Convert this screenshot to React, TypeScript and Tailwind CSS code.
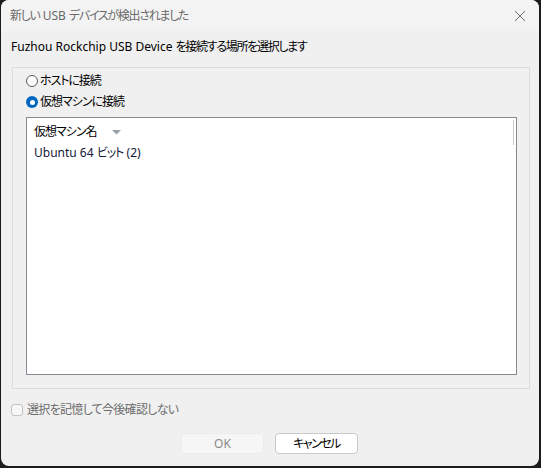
import React from "react";

export default function App() {
  const font = { fontFamily: '"Noto Sans", "Noto Sans CJK JP", sans-serif' };
  return (
    <div className="w-[541px] h-[468px] bg-[#1c1c1c] pl-px pr-[2px] pb-[2px] [font-feature-settings:'palt']" style={font}>
      <div className="w-full h-full rounded-[8px] overflow-hidden bg-[#f0f0f0] flex flex-col">
        {/* Title bar */}
        <div className="h-[31px] bg-[#f3f3f3] flex items-center justify-between pl-[9px] pr-[10px] shrink-0">
          <span className="text-[12px] text-[#6a6a6a] leading-none whitespace-pre">
            <span className="tracking-[-1.3px]">新しい</span>
            <span> USB </span>
            <span className="tracking-[-1.3px]">デバイスが検出されました</span>
          </span>
          <svg width="12" height="12" viewBox="0 0 12 12" className="mr-[3px]">
            <path d="M1 1 L11 11 M11 1 L1 11" stroke="#707070" strokeWidth="1" />
          </svg>
        </div>
        <div className="flex-1 flex flex-col pl-[10px] pr-[9px]">
          <div className="h-[36px] pb-[4px] flex items-center text-[12px] text-black leading-none whitespace-pre">
            <span>Fuzhou Rockchip USB Device </span>
            <span className="tracking-[-1.3px]">を接続する場所を選択します</span>
          </div>
          {/* group box */}
          <div className="h-[322px] border border-[#dcdcdc] ml-px flex flex-col pl-[13px] pr-[12px] pt-[6px]">
            <label className="flex items-center h-[14px] gap-[2px] text-[12px] text-black leading-none">
              <span className="w-[12px] h-[12px] rounded-full border border-[#5c5c5c] bg-white inline-block" />
              <span className="tracking-[-1.1px]">ホストに接続</span>
            </label>
            <label className="flex items-center h-[14px] mt-[7px] gap-[2px] text-[12px] text-black leading-none">
              <span className="w-[12px] h-[12px] rounded-full bg-[#0067c0] flex items-center justify-center">
                <span className="w-[5px] h-[5px] rounded-full bg-white" />
              </span>
              <span className="tracking-[-1px]">仮想マシンに接続</span>
            </label>
            <div className="mt-[8px] h-[258px] border border-[#868a91] bg-white relative">
              <div className="absolute right-[2px] top-[2px] w-px h-[25px] bg-[#c8c8c8]" />
              <div className="flex items-center h-[28px] pl-[7px] text-[12px] text-black leading-none">
                <span className="tracking-[-1px]">仮想マシン名</span>
                <svg width="9" height="5" viewBox="0 0 9 5" className="ml-[15px]">
                  <path d="M0 0 L9 0 L4.5 4.5 Z" fill="#9aa0a8" />
                </svg>
              </div>
              <div className="flex items-center h-[14px] pl-[7px] text-[12px] text-[#14183a] leading-none whitespace-pre">
                <span>Ubuntu 64 </span>
                <span className="tracking-[-1px]">ビット</span>
                <span> (2)</span>
              </div>
            </div>
          </div>
          <label className="flex items-center h-[14px] mt-[14px] gap-[4px] text-[12px] text-[#6d6d6d] leading-none">
            <span className="w-[12px] h-[12px] rounded-[3px] border border-[#c4c4c4] bg-[#f7f7f7] inline-block" />
            <span className="tracking-[-0.7px]">選択を記憶して今後確認しない</span>
          </label>
          <div className="flex justify-center gap-[11px] mt-[16px] pr-[2px]">
            <div className="w-[83px] h-[21px] rounded-[4px] bg-[#f6f6f6] border border-[#ececec] flex items-center justify-center text-[12px] text-[#8a8a8a] leading-none">
              OK
            </div>
            <div className="w-[83px] h-[21px] rounded-[4px] bg-white border border-[#c9c9c9] flex items-center justify-center text-[12px] text-black leading-none tracking-[-1.5px]">
              キャンセル
            </div>
          </div>
        </div>
      </div>
    </div>
  );
}
